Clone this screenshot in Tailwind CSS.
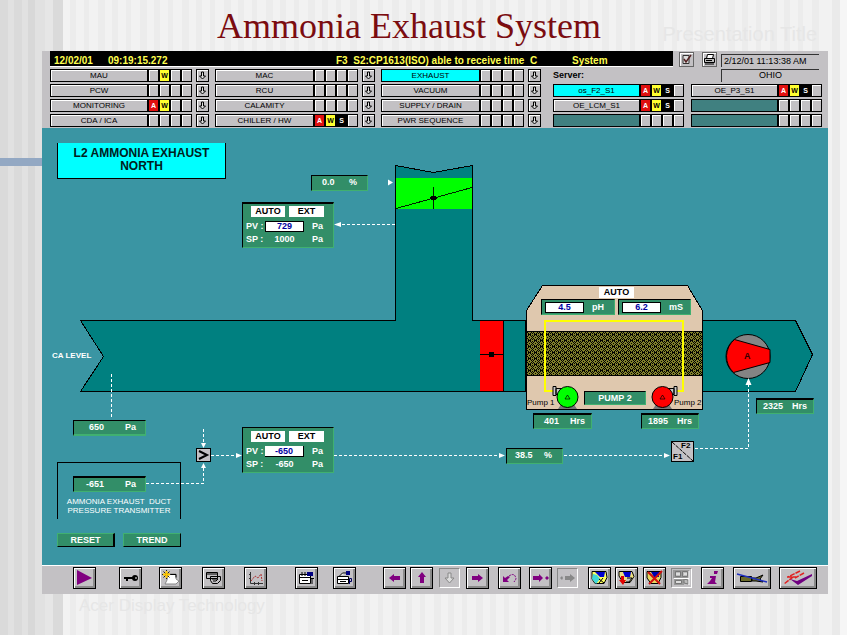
<!DOCTYPE html>
<html lang="en">

<head>
  <meta charset="UTF-8">
  <meta name="viewport" content="width=device-width, initial-scale=1.0">
  <title>Ammonia Exhaust System</title>
  <script src="https://cdn.jsdelivr.net/npm/@tailwindcss/browser@4"></script>
</head>

<body class="relative min-h-screen overflow-x-hidden bg-[#f2f2f2] font-['Liberation_Sans',sans-serif] text-black">
  <!-- Striped slide background -->
  <svg id="stripes" class="absolute inset-0 -z-10 w-full h-full" aria-hidden="true"></svg>
  <div class="absolute left-0 top-[158px] -z-10 w-[42px] h-2 bg-[#93a8c3]"></div>

  <!-- Slide title -->
  <header class="relative h-[51px] pr-8">
    <h1 class="pl-[217px] pt-1 font-['Liberation_Serif',serif] text-[36px] leading-[44px] text-[#7b0c10] whitespace-nowrap">Ammonia Exhaust System</h1>
    <p class="absolute right-[30px] top-[22px] text-[20px] leading-6 text-[#e6e6e6]">Presentation Title</p>
  </header>

  <main class="ml-[42px] mr-[19px] bg-[#c3c1c4]">
    <!-- Alarm line -->
    <div class="flex pl-2 pr-[9px]">
      <div class="flex-1 flex items-center h-4 pt-1 pl-1 bg-black border-b border-white text-[10px] leading-3 font-bold text-[#ffff50] whitespace-pre">
        <span class="w-[54px]">12/02/01</span>
        <span class="w-[228px]">09:19:15.272</span>
        <span class="w-[236px]">F3  S2:CP1613(ISO) able to receive time  C</span>
        <span>System</span>
      </div>
      <button aria-label="Acknowledge" class="ml-1.5 mt-px size-[15px] border border-[#666] shadow-[inset_1px_1px_0_#fff]">
        <svg viewBox="0 0 13 13" class="size-[13px]"><path d="M3 2.5h6v8H3z" fill="#ddd" stroke="#333"/><path d="M4 6l2 3 5-7" fill="none" stroke="#522" stroke-width="1.5"/></svg>
      </button>
      <button aria-label="Print" class="ml-2 mt-px size-[15px] border border-[#666] shadow-[inset_1px_1px_0_#fff]">
        <svg viewBox="0 0 13 13" class="size-[13px]"><path d="M4.500 1.500h6l-1 4h-6z" fill="#fff" stroke="#000"/><path d="M1.500 5.500h10v4h-10z" fill="#bbb" stroke="#000"/><path d="M2 11h9M3 7.500h6" stroke="#000"/></svg>
      </button>
      <div class="ml-1 mt-[3px] w-[98px] h-[13px] border-t border-l border-[#333] pl-0.5 text-[9px] leading-3 whitespace-nowrap">2/12/01 11:13:38 AM</div>
    </div>

    <!-- Area buttons and server list -->
    <nav class="grid grid-cols-[159fr_160fr_160fr_137fr_132fr] gap-x-1.5 pl-2 pr-1.5 pt-0.5 pb-px">
      <div id="area1" class="flex flex-col gap-0.5"></div>
      <div id="area2" class="flex flex-col gap-0.5"></div>
      <div id="area3" class="flex flex-col gap-0.5"></div>
      <div id="server1" class="flex flex-col gap-0.5 ml-1.5">
        <p class="h-[13px] text-[9px] leading-[13px] font-bold">Server:</p>
      </div>
      <div id="server2" class="flex flex-col gap-0.5 ml-px">
        <p class="h-[13px] ml-[30px] mr-[3px] border-t border-l border-[#333] text-center text-[9px] leading-[11px]">OHIO</p>
      </div>
    </nav>

    <!-- Process diagram -->
    <section class="relative h-[437px] overflow-hidden bg-[#3a95a3] text-[9px] font-bold text-white" aria-label="L2 ammonia exhaust north">
      <svg viewBox="42 128 786 437" class="absolute left-0 top-0 w-[786px] h-[437px]" shape-rendering="crispEdges">
        <defs>
          <pattern id="mesh" x="526" y="331" width="6" height="6" patternUnits="userSpaceOnUse">
            <rect width="6" height="6" fill="#80802a"/>
            <path d="M0 0h1v1H0zM3 0h1v1H3zM1 1h1v1H1zM5 1h1v1H5zM2 2h1v1H2zM4 2h1v1H4zM0 2h1v1H0zM2 3h3v1H2zM2 4h1v1H2zM4 4h1v1H4zM0 4h1v1H0zM1 5h1v1H1zM5 5h1v1H5z" fill="#000"/>
          </pattern>
        </defs>

        <!-- duct -->
        <path d="M80.500 320.500H395.500V165.500L433.500 172.500L472.500 165.500V320.500H795.500L812.500 354.500L795.500 391.500H80.500L103.500 356.500Z" fill="#008080" stroke="#000"/>

        <!-- open damper -->
        <rect x="396" y="178" width="76" height="31" fill="#00ff00"/>
        <path d="M396 208.500L472 187.500M433.500 187V209" stroke="#002000"/>
        <ellipse cx="433.500" cy="198" rx="3.500" ry="2.500"/>

        <!-- closed damper -->
        <rect x="480" y="321" width="24" height="70" fill="#ff0000"/>
        <path d="M503.500 320V391M480 354.500H503M525 320.500V391" stroke="#000"/>
        <rect x="489" y="352" width="5" height="5"/>

        <!-- scrubber -->
        <path d="M542.500 285.500H687.500L702.500 310.500V409.500H526.500V310.500Z" fill="#dfc8ae" stroke="#000"/>
        <rect x="527" y="331" width="175" height="45" fill="url(#mesh)"/>
        <path d="M526 331.500H703M526 375.500H703" stroke="#000"/>
        <path d="M554 391H545V321H683V391H675" fill="none" stroke="#ffff00" stroke-width="2"/>

        <!-- pumps -->
        <g stroke="#000" shape-rendering="auto">
          <path d="M558 409l4-6h11l4 6zM653 409l4-6h11l4 6z" fill="#777" stroke="none"/>
          <path d="M553 386.500h3v9h-3zM556 388.500h10v6h-10z" fill="#c8c8c8"/>
          <path d="M674 386.500h3v9h-3zM664 388.500h10v6h-10z" fill="#c8c8c8"/>
          <circle cx="567.500" cy="397" r="10.500" fill="#00ff00"/>
          <circle cx="662.500" cy="397" r="10.500" fill="#ff0000"/>
          <path d="M565 399l2.500-4 2.500 4zM660 399l2.500-4 2.500 4z" fill="none" stroke-width=".7"/>
        </g>

        <!-- fan -->
        <g stroke="#000" shape-rendering="auto">
          <circle cx="748" cy="356.500" r="22" fill="#848484"/>
          <path d="M734.500 339.500L770 349.500V362.500L733.500 372.500A22 22 0 0 1 734.500 339.500Z" fill="#ff0000"/>
        </g>

        <!-- signal lines -->
        <g fill="none" stroke="#fff" stroke-dasharray="3 2">
          <path d="M395 224.500H341"/>
          <path d="M111.500 374V418"/>
          <path d="M203.500 429V443"/>
          <path d="M146 483.500H203.500V468"/>
          <path d="M211 455.500H236"/>
          <path d="M334 455.500H499"/>
          <path d="M564 455.500H664"/>
          <path d="M695 448.500H748.500V385"/>
        </g>
        <path d="M334 224.500l7-2.500v5zM388 179.500v6l5-3zM201 443h5l-2.500 5zM201 468h5l-2.500-5zM236 453v5l6-2.500zM499 453v5l6-2.500zM664 453v5l6-2.500zM745.500 385h6l-3-7z" fill="#fff" shape-rendering="auto"/>

        <!-- selector and split range blocks -->
        <rect x="196.500" y="448.500" width="14" height="13" fill="#c3c1c4" stroke="#000"/>
        <path d="M199 451l8 4-8 4" fill="none" stroke="#000" stroke-width="2" shape-rendering="auto"/>
        <rect x="671.500" y="441.500" width="22" height="20" fill="#c3c1c4" stroke="#000"/>
        <path d="M672 442l21 19" stroke="#000" stroke-dasharray="4 1" shape-rendering="auto"/>

        <!-- transmitter frame -->
        <path d="M57.500 519V462.500H180.500V519" fill="none" stroke="#000"/>
      </svg>

      <h2 class="absolute left-[15px] top-[15px] w-[169px] h-9 border border-t-0 border-black bg-[#00ffff] pt-1 text-center text-[12px] leading-[13px] text-[#002020]">L2 AMMONIA EXHAUST<br>NORTH</h2>

      <div class="absolute left-[269px] top-[47px] w-[57px] h-4 flex justify-between px-2.5 items-center border border-t-black border-l-black border-b-[#40b070] border-r-[#40b070] bg-[#328e68]"><span>0.0</span><span>%</span></div>

      <!-- Controller faceplates -->
      <div class="absolute left-[200px] top-[74px] w-[92px] h-[46px] border border-t-2 border-t-black border-l-black border-b-[#40b070] border-r-[#40b070] bg-[#328e68] px-[3px] pt-0.5">
        <div class="flex gap-1 pl-[5px]">
          <button class="w-[34px] h-[11px] bg-white text-black leading-[11px]">AUTO</button>
          <button class="w-[35px] h-[11px] bg-white text-black leading-[11px]">EXT</button>
        </div>
        <div class="mt-1 flex items-center leading-[11px]">
          <label for="pv1" class="w-[19px] whitespace-nowrap">PV :</label>
          <input id="pv1" value="729" class="w-[39px] h-[11px] border border-black bg-white text-center text-[#0000a0]">
          <span class="ml-2">Pa</span>
        </div>
        <div class="mt-0.5 flex items-center leading-[11px]">
          <span class="w-[19px] whitespace-nowrap">SP :</span>
          <span class="w-[39px] text-center">1000</span>
          <span class="ml-2">Pa</span>
        </div>
      </div>

      <div class="absolute left-[200px] top-[299px] w-[92px] h-[46px] border border-t-black border-l-black border-b-[#40b070] border-r-[#40b070] bg-[#328e68] px-[3px] pt-[3px]">
        <div class="flex gap-1 pl-[5px]">
          <button class="w-[34px] h-[11px] bg-white text-black leading-[11px]">AUTO</button>
          <button class="w-[35px] h-[11px] bg-white text-black leading-[11px]">EXT</button>
        </div>
        <div class="mt-1 flex items-center leading-[11px]">
          <label for="pv2" class="w-[19px] whitespace-nowrap">PV :</label>
          <input id="pv2" value="-650" class="w-[39px] h-[11px] border-r border-b border-black bg-white text-center text-[#0000a0]">
          <span class="ml-2">Pa</span>
        </div>
        <div class="mt-0.5 flex items-center leading-[11px]">
          <span class="w-[19px] whitespace-nowrap">SP :</span>
          <span class="w-[39px] text-center">-650</span>
          <span class="ml-2">Pa</span>
        </div>
      </div>

      <!-- Left side readings -->
      <p class="absolute left-[10px] top-[222px] text-[8px] leading-3 whitespace-nowrap">CA LEVEL</p>
      <div class="absolute left-[31px] top-[292px] w-[73px] h-4 flex justify-between pl-[15px] pr-[9px] items-center border border-t-black border-l-black border-b-2 border-b-[#40b070] border-r-[#40b070] bg-[#328e68]"><span>650</span><span>Pa</span></div>
      <div class="absolute left-[31px] top-[348px] w-[73px] h-4 flex justify-between pl-3 pr-[9px] items-center border border-t-2 border-t-black border-l-black border-b-[#40b070] border-r-[#40b070] bg-[#328e68]"><span>-651</span><span>Pa</span></div>
      <p class="absolute left-[16px] top-[369px] w-[122px] text-center text-[8px] leading-[9px] font-normal whitespace-nowrap">AMMONIA EXHAUST &nbsp;DUCT<br>PRESSURE TRANSMITTER</p>
      <button class="absolute left-[15px] top-[405px] w-[58px] h-[14px] border border-r-2 border-t-[#40b070] border-l-[#40b070] border-b-black border-r-black bg-[#328e68] leading-3">RESET</button>
      <button class="absolute left-[81px] top-[405px] w-[58px] h-[14px] border border-t-[#40b070] border-l-[#40b070] border-b-black border-r-black bg-[#328e68] leading-3">TREND</button>

      <!-- Scrubber readings -->
      <button class="absolute left-[557px] top-[159px] w-[35px] h-[11px] bg-white text-black leading-[11px]">AUTO</button>
      <div class="absolute left-[499px] top-[171px] w-[74px] h-4 flex items-center border border-t-black border-l-black border-b-[#40b070] border-r-[#40b070] bg-[#328e68] pl-[3px] leading-[11px]">
        <input id="ph" value="4.5" class="w-[39px] h-[11px] border border-black bg-white text-center text-[#0000a0]">
        <label for="ph" class="ml-2">pH</label>
      </div>
      <div class="absolute left-[576px] top-[171px] w-[73px] h-4 flex items-center border border-t-black border-l-black border-b-[#40b070] border-r-[#40b070] bg-[#328e68] pl-[3px] leading-[11px]">
        <input id="ms" value="6.2" class="w-[39px] h-[11px] border border-black bg-white text-center text-[#0000a0]">
        <label for="ms" class="ml-2">mS</label>
      </div>
      <p class="absolute left-[485px] top-[270px] text-[8px] leading-[10px] font-normal text-black">Pump 1</p>
      <p class="absolute left-[632px] top-[270px] text-[8px] leading-[10px] font-normal text-black">Pump 2</p>
      <button class="absolute left-[542px] top-[263px] w-[62px] h-[14px] border border-t-black border-l-black border-b-[#40b070] border-r-[#40b070] bg-[#328e68] leading-3">PUMP 2</button>
      <div class="absolute left-[491px] top-[285px] w-[59px] h-4 flex justify-between pl-2.5 pr-1.5 items-center border border-t-2 border-t-black border-l-black border-b-[#40b070] border-r-[#40b070] bg-[#328e68]"><span>401</span><span>Hrs</span></div>
      <div class="absolute left-[599px] top-[285px] w-[58px] h-4 flex justify-between px-1.5 items-center border border-t-2 border-t-black border-l-black border-b-[#40b070] border-r-[#40b070] bg-[#328e68]"><span>1895</span><span>Hrs</span></div>
      <div class="absolute left-[464px] top-[320px] w-[57px] h-4 flex justify-between pl-2 pr-2.5 items-center border border-t-black border-l-black border-b-[#40b070] border-r-[#40b070] bg-[#328e68]"><span>38.5</span><span>%</span></div>
      <div class="absolute left-[714px] top-[270px] w-[58px] h-4 flex justify-between px-1.5 items-center border border-t-2 border-t-black border-l-black border-b-[#40b070] border-r-[#40b070] bg-[#328e68]"><span>2325</span><span>Hrs</span></div>
      <span class="absolute left-[702px] top-[222px] text-[9px] leading-3 text-[#300]">A</span>
      <span class="absolute left-[639px] top-[313px] text-[8px] leading-[10px] text-black">F2</span>
      <span class="absolute left-[631px] top-[324px] text-[8px] leading-[10px] text-black">F1</span>
    </section>

    <!-- Toolbar -->
    <footer class="flex h-[29px] border-t border-white pl-[31px] pt-px">
      <button aria-label="Start" class="w-[23px] h-[22px] border border-black p-0.5 shadow-[inset_1px_1px_0_#fff,inset_-2px_-2px_0_#8a8a8a]">
        <svg viewBox="0 0 17 16" class="w-[17px] h-4"><path d="M1 0l15 8-15 7z" fill="#800080"/></svg>
      </button>
      <button aria-label="Log in" class="ml-[23px] w-[23px] h-[22px] border border-black p-0.5 shadow-[inset_1px_1px_0_#fff,inset_-2px_-2px_0_#8a8a8a]">
        <svg viewBox="0 0 17 16" class="w-[17px] h-4"><path d="M2 7h9v2H6v2H4V9H2z"/><circle cx="13" cy="8" r="3"/><path d="M13 8h2" stroke="#fff"/></svg>
      </button>
      <button aria-label="New screen" class="ml-[17px] w-[23px] h-[22px] border border-black p-0.5 shadow-[inset_1px_1px_0_#fff,inset_-2px_-2px_0_#8a8a8a]">
        <svg viewBox="0 0 17 16" class="w-[17px] h-4"><path d="M6 4h8v5l3 2-3 3H3l2-4z" fill="#fff" stroke="#888"/><path d="M9 4.500h5v3" fill="none" stroke="#000"/><path d="M4.500 0v9M0 4.500h9M1.500 1.500l6 6M7.500 1.500l-6 6" stroke="#222"/><path d="M4.500 1v7M1 4.500h7" stroke="#ffc800" stroke-width="2"/></svg>
      </button>
      <button aria-label="Open screen" class="ml-5 w-[23px] h-[22px] border border-black p-0.5 shadow-[inset_1px_1px_0_#fff,inset_-2px_-2px_0_#8a8a8a]">
        <svg viewBox="0 0 17 16" class="w-[17px] h-4"><path d="M1.500 2.500h11v6h-11zM1 4h12M5.500 6.500h10v4l-3 3h-5l-2-3z" fill="#c3c1c4" stroke="#000"/><path d="M7 9h6l-2 2H8" fill="none" stroke="#000"/></svg>
      </button>
      <button aria-label="Trend" class="ml-[19px] w-[23px] h-[22px] border border-black p-0.5 shadow-[inset_1px_1px_0_#fff,inset_-2px_-2px_0_#8a8a8a]">
        <svg viewBox="0 0 17 16" class="w-[17px] h-4"><path d="M3.500 2v11.500H16M2 4.500h2M2 8.500h2M7.500 12v3M11.500 12v3" fill="none" stroke="#333"/><path d="M4 11l4-5 3 2 3-4 1 7" fill="none" stroke="#b03030" stroke-dasharray="2 1"/></svg>
      </button>
      <button aria-label="Tag table" class="ml-7 w-[23px] h-[22px] border border-black p-0.5 shadow-[inset_1px_1px_0_#fff,inset_-2px_-2px_0_#8a8a8a]">
        <svg viewBox="0 0 17 16" class="w-[17px] h-4"><path d="M1.500 4.500h11v9h-11z" fill="#fff" stroke="#000"/><path d="M2 7.500h10M4 10.500h6M4 2v4M7 2v4" stroke="#000"/><path d="M9 2h6v4H9z" fill="#000080"/><path d="M12 8.500h4M14 8v6" stroke="#000"/></svg>
      </button>
      <button aria-label="Parameter table" class="ml-[15px] w-[23px] h-[22px] border border-black p-0.5 shadow-[inset_1px_1px_0_#fff,inset_-2px_-2px_0_#8a8a8a]">
        <svg viewBox="0 0 17 16" class="w-[17px] h-4"><path d="M1.500 6.500h11v7h-11zM3.500 6l3-3h4" fill="#fff" stroke="#000"/><path d="M2 9.500h10M4 11.500h6" stroke="#000"/><path d="M10 1h4v4h-4z" fill="#000080"/><path d="M13.500 14V8.500h2v3h-2" fill="none" stroke="#000060"/></svg>
      </button>

      <button aria-label="Left" class="ml-[27px] w-[23px] h-[22px] border border-black p-0.5 shadow-[inset_1px_1px_0_#fff,inset_-2px_-2px_0_#8a8a8a]">
        <svg viewBox="0 0 17 16" class="w-[17px] h-4"><path d="M3 8l5-4v2h6v4H8v2z" fill="#800080"/></svg>
      </button>
      <button aria-label="Up" class="ml-1 w-[23px] h-[22px] border border-black p-0.5 shadow-[inset_1px_1px_0_#fff,inset_-2px_-2px_0_#8a8a8a]">
        <svg viewBox="0 0 17 16" class="w-[17px] h-4"><path d="M9 2l4 5h-2v6H7V7H5z" fill="#800080"/></svg>
      </button>
      <button aria-label="Down" disabled class="ml-1.5 w-[21px] h-5 mr-0.5 mt-px border border-t-[#888] border-l-[#888] border-b-white border-r-white p-px">
        <svg viewBox="0 0 17 16" class="w-[17px] h-4"><path d="M7 3h3v5h3l-4.500 5L4 8h3z" fill="#ddd" stroke="#888"/></svg>
      </button>
      <button aria-label="Right" class="ml-1 w-[23px] h-[22px] border border-black p-0.5 shadow-[inset_1px_1px_0_#fff,inset_-2px_-2px_0_#8a8a8a]">
        <svg viewBox="0 0 17 16" class="w-[17px] h-4"><path d="M14 8L9 4v2H3v4h6v2z" fill="#800080"/></svg>
      </button>
      <button aria-label="Back" class="ml-[9px] w-[23px] h-[22px] border border-black p-0.5 shadow-[inset_1px_1px_0_#fff,inset_-2px_-2px_0_#8a8a8a]">
        <svg viewBox="0 0 17 16" class="w-[17px] h-4"><path d="M2 6v6h6l-2-2 3-3-2-1-3 2z" fill="#800080"/><path d="M8 6q6-4 7 3l-2 3" fill="none" stroke="#800080" stroke-dasharray="2 1"/></svg>
      </button>
      <button aria-label="Store" class="ml-2 w-[23px] h-[22px] border border-black p-0.5 shadow-[inset_1px_1px_0_#fff,inset_-2px_-2px_0_#8a8a8a]">
        <svg viewBox="0 0 17 16" class="w-[17px] h-4"><path d="M11 8L7 4v2H1v4h6v2zM13 8l2-2 2 2-2 2z" fill="#800080"/></svg>
      </button>
      <button aria-label="Recall" disabled class="ml-[5px] w-[21px] h-5 mr-0.5 mt-px border border-t-[#888] border-l-[#888] border-b-white border-r-white p-px">
        <svg viewBox="0 0 17 16" class="w-[17px] h-4"><path d="M16 8l-5-4v2H6v4h5v2zM1 8l2-2 1 2-1 2z" fill="#888"/></svg>
      </button>

      <button aria-label="Alarm list" class="ml-2 w-[23px] h-[22px] border border-black p-0.5 shadow-[inset_1px_1px_0_#fff,inset_-2px_-2px_0_#8a8a8a]">
        <svg viewBox="0 0 17 16" class="w-[17px] h-4"><path d="M1 1.500h14l1 6-3 6H4L1 9z" fill="#ffff60" stroke="#000"/><path d="M4 2h10l-1 5H9z" fill="#0000d0"/><path d="M2 4l4 1 3 4-4 5-4-5z" fill="#40d8d8"/><path d="M8 9l5 4M12 8l-4 5" stroke="#000"/></svg>
      </button>
      <button aria-label="Lock alarm" class="ml-1 w-[23px] h-[22px] border border-black p-0.5 shadow-[inset_1px_1px_0_#fff,inset_-2px_-2px_0_#8a8a8a]">
        <svg viewBox="0 0 17 16" class="w-[17px] h-4"><path d="M1 1.500h13l2 5-4 6H5L1 6z" fill="#eee080" stroke="#000"/><path d="M5 2h8l-1 5H7z" fill="#0000d0"/><path d="M3 6h3v4h2l-3 5-4-5h2z" fill="#e00000"/><path d="M9 8h5l-3 4H8" fill="#c3c1c4" stroke="#000"/></svg>
      </button>
      <button aria-label="Clear alarm" class="ml-[5px] w-[23px] h-[22px] border border-black p-0.5 shadow-[inset_1px_1px_0_#fff,inset_-2px_-2px_0_#8a8a8a]">
        <svg viewBox="0 0 17 16" class="w-[17px] h-4"><path d="M1 1.500h14v6l-3 6H5L1 8z" fill="#e8d860" stroke="#000"/><path d="M5 2h8v5H8z" fill="#0000b0"/><path d="M2 2l12 12M16 1L3 14" stroke="#d01010" stroke-width="2"/></svg>
      </button>
      <button aria-label="Group display" disabled class="ml-[5px] w-[21px] h-5 mr-0.5 mt-px border border-t-[#888] border-l-[#888] border-b-white border-r-white p-px">
        <svg viewBox="0 0 17 16" class="w-[17px] h-4"><path d="M0 0h16v8H0zM1 9h10v6H1z" fill="#999"/><path d="M2.500 1.500h5v5h-5zM9.500 1.500h5v5h-5zM2.500 10.500h6v3h-6zM11 9l4 1v4l-4-1z" fill="#bbb" stroke="#777"/><path d="M3 4h4M11 4h3M3 12h5M1 8.500h15M16 1v14" stroke="#fff"/></svg>
      </button>
      <button aria-label="Info" class="ml-[7px] w-[23px] h-[22px] border border-black p-0.5 shadow-[inset_1px_1px_0_#fff,inset_-2px_-2px_0_#8a8a8a]">
        <svg viewBox="0 0 17 16" class="w-[17px] h-4"><path d="M10 1h4l-1 3h-3zM6 6h6l-1 6 2 2H3l3-3 2-3H6z" fill="#800080"/></svg>
      </button>
      <button aria-label="Horn off" class="ml-[9px] w-[38px] h-[22px] border border-black p-0.5 shadow-[inset_1px_1px_0_#fff,inset_-2px_-2px_0_#8a8a8a]">
        <svg viewBox="0 0 32 16" class="w-8 h-4"><path d="M4.500 6.500h11v5h-11zM16 8l4 0 7-3-3 4 3 3-7-1h-4z" fill="#6b6b2a" stroke="#000"/><path d="M1 4l30 8" stroke="#2030c0" stroke-width="1.500"/></svg>
      </button>
      <button aria-label="Acknowledge all" class="ml-2 w-[38px] h-[22px] border border-black p-0.5 shadow-[inset_1px_1px_0_#fff,inset_-2px_-2px_0_#8a8a8a]">
        <svg viewBox="0 0 32 16" class="w-8 h-4"><path d="M18 1L6 7l5 0-9 7M22 3l-9 5M5 7h9" fill="none" stroke="#e02020" stroke-width="1.500" stroke-dasharray="5 1"/><path d="M8 9l7 2L30 4v2L16 15z" fill="#700080"/></svg>
      </button>
    </footer>
  </main>
  <p class="pl-[79px] text-[17px] leading-6 text-[#e6e6e6]">Acer Display Technology</p>

<script>
"use strict";
// flags: A = alarm, W = warning, S = system, "-" = nothing pending
const areas = {
  area1: [["MAU", "-W--"], ["PCW", "----"], ["MONITORING", "AW--"], ["CDA / ICA", "----"]],
  area2: [["MAC", "----"], ["RCU", "----"], ["CALAMITY", "----"], ["CHILLER / HW", "AWS-"]],
  area3: [["EXHAUST", "----", true], ["VACUUM", "----"], ["SUPPLY / DRAIN", "----"], ["PWR SEQUENCE", "----"]],
};
const servers = {
  server1: [["os_F2_S1", "AWS-", true], ["OE_LCM_S1", "AWS-"], ["", "----"]],
  server2: [["OE_P3_S1", "AWS-"], ["", "----"], ["", "----"]],
};

const flagColors = {
  A: "bg-[#e01010] text-white",
  W: "bg-[#ffff30] text-black",
  S: "bg-black text-white",
  "-": "bg-[#c3c1c4] shadow-[inset_1px_1px_0_#fff]",
};

function buildRow(name, flags, active, withArrow) {
  let color = "bg-[#c3c1c4] shadow-[inset_1px_1px_0_#fff]";
  if (active) color = "bg-[#00ffff]";
  if (!name) color = "bg-[#408080]";
  const cells = flags
    .split("")
    .map((f) => `<span class="w-[11px] border-l-2 border-black text-center text-[7px] leading-[11px] font-bold ${flagColors[f]}">${f === "-" ? "" : f}</span>`)
    .join("");
  const arrow = `<button aria-label="Open ${name}" class="ml-1 w-[13px] h-[13px] border border-black shadow-[inset_1px_1px_0_#fff]">
      <svg viewBox="0 0 11 11" class="size-[11px]"><path d="M4.500 2v4h-2l3 3 3-3h-2V2z" fill="#ddd" stroke="#000"/></svg>
    </button>`;
  return `<div class="flex h-[13px]">
      <div class="flex flex-1 border border-black">
        <button aria-label="${name || "Unused server"}" class="flex-1 text-center text-[8px] leading-[11px] whitespace-nowrap ${color}">${name}</button>
        ${cells}
      </div>
      ${withArrow ? arrow : ""}
    </div>`;
}

function fill(groups, withArrow) {
  for (const id in groups) {
    const html = groups[id].map((r) => buildRow(r[0], r[1], r[2], withArrow)).join("");
    document.getElementById(id).insertAdjacentHTML("beforeend", html);
  }
}
fill(areas, true);
fill(servers, false);

// background bars: x, width, colour
const bars = [
  [0, 63, "#e1e1e1"], [0, 8, "#dadada"], [14, 8, "#dadada"], [28, 7, "#d8d8d8"], [45, 8, "#e6e6e6"], [53, 10, "#dadada"],
  [832, 8, "#eaeaea"], [840, 60, "#f6f6f6"],
];
for (let x = 70; x < 820; x += 14) bars.push([x, 5 + (x % 3), "#ececec"]);
document.getElementById("stripes").innerHTML = bars
  .map(([x, w, c]) => `<rect x="${x}" y="0" width="${w}" height="100%" fill="${c}"/>`)
  .join("");
</script>
</body>

</html>
